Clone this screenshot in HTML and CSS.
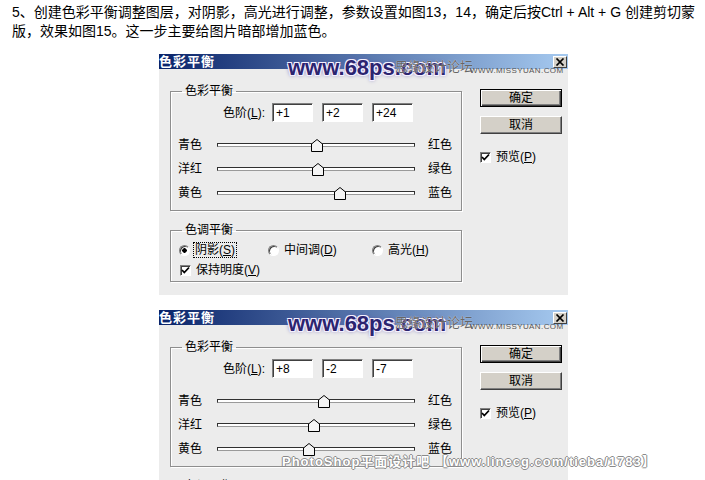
FILE: index.html
```html
<!DOCTYPE html>
<html lang="zh-CN">
<head>
    <meta charset="UTF-8">
    <title>色彩平衡</title>
    <link rel="stylesheet" href="styles.css">
</head>
<body>

    <div class="post">
        <p class="step">5、创建色彩平衡调整图层，对阴影，高光进行调整，参数设置如图13，14，确定后按Ctrl + Alt + G 创建剪切蒙<br>版，效果如图15。这一步主要给图片暗部增加蓝色。</p>

        <!-- 图13 -->
        <div class="dlg">
            <div class="titlebar">
                <span class="title">色彩平衡</span>
                <span class="close"><svg width="10" height="8" viewBox="0 0 10 8"><path d="M1.5 0.5 L8.5 7.5 M8.5 0.5 L1.5 7.5" stroke="#000" stroke-width="1.7"/></svg></span>
            </div>
            <span class="mark-68">www.68ps.com</span>
            <span class="mark-cn">思缘设计论坛</span>
            <span class="mark-url">WWW.MISSYUAN.COM</span>

            <div class="dlg-body">
                <div class="main">
                    <fieldset class="group">
                        <legend>色彩平衡</legend>
                        <div class="levels">
                            <span class="levels-label">色阶(<u>L</u>):</span>
                            <span class="field">+1</span>
                            <span class="field">+2</span>
                            <span class="field">+24</span>
                        </div>
                        <div class="sliders">
                            <div class="slider">
                                <span>青色</span>
                                <div class="track"><svg class="thumb" style="left: calc(50% + 1px)" width="12" height="13" viewBox="0 0 12 13"><path d="M0.5 5 L6 0.5 L11.5 5 L11.5 12.5 L0.5 12.5 Z" fill="#f4f4f4" stroke="#000"/></svg></div>
                                <span>红色</span>
                            </div>
                            <div class="slider">
                                <span>洋红</span>
                                <div class="track"><svg class="thumb" style="left: calc(50% + 2px)" width="12" height="13" viewBox="0 0 12 13"><path d="M0.5 5 L6 0.5 L11.5 5 L11.5 12.5 L0.5 12.5 Z" fill="#f4f4f4" stroke="#000"/></svg></div>
                                <span>绿色</span>
                            </div>
                            <div class="slider">
                                <span>黄色</span>
                                <div class="track"><svg class="thumb" style="left: calc(50% + 24px)" width="12" height="13" viewBox="0 0 12 13"><path d="M0.5 5 L6 0.5 L11.5 5 L11.5 12.5 L0.5 12.5 Z" fill="#f4f4f4" stroke="#000"/></svg></div>
                                <span>蓝色</span>
                            </div>
                        </div>
                    </fieldset>

                    <fieldset class="group tone">
                        <legend>色调平衡</legend>
                        <div class="radios">
                            <span class="radio-item"><span class="radio on"></span><span class="focus">阴影(<u>S</u>)</span></span>
                            <span class="radio-item"><span class="radio"></span><span>中间调(<u>D</u>)</span></span>
                            <span class="radio-item"><span class="radio"></span><span>高光(<u>H</u>)</span></span>
                        </div>
                        <div class="check-row">
                            <span class="checkbox"><svg width="9" height="9" viewBox="0 0 9 9"><path d="M1 4 L3.3 6.5 L8 1.5" stroke="#000" stroke-width="1.8" fill="none"/></svg></span>
                            <span>保持明度(<u>V</u>)</span>
                        </div>
                    </fieldset>
                </div>

                <div class="side">
                    <button class="btn default">确定</button>
                    <button class="btn">取消</button>
                    <div class="preview">
                        <span class="checkbox"><svg width="9" height="9" viewBox="0 0 9 9"><path d="M1 4 L3.3 6.5 L8 1.5" stroke="#000" stroke-width="1.8" fill="none"/></svg></span>
                        <span>预览(<u>P</u>)</span>
                    </div>
                </div>
            </div>
        </div>

        <!-- 图14 -->
        <div class="dlg">
            <div class="titlebar">
                <span class="title">色彩平衡</span>
                <span class="close"><svg width="10" height="8" viewBox="0 0 10 8"><path d="M1.5 0.5 L8.5 7.5 M8.5 0.5 L1.5 7.5" stroke="#000" stroke-width="1.7"/></svg></span>
            </div>
            <span class="mark-68">www.68ps.com</span>
            <span class="mark-cn">思缘设计论坛</span>
            <span class="mark-url">WWW.MISSYUAN.COM</span>
            <span class="mark-bottom">PhotoShop平面设计吧 【www.linecg.com/tieba/1783】</span>

            <div class="dlg-body">
                <div class="main">
                    <fieldset class="group">
                        <legend>色彩平衡</legend>
                        <div class="levels">
                            <span class="levels-label">色阶(<u>L</u>):</span>
                            <span class="field">+8</span>
                            <span class="field">-2</span>
                            <span class="field">-7</span>
                        </div>
                        <div class="sliders">
                            <div class="slider">
                                <span>青色</span>
                                <div class="track"><svg class="thumb" style="left: calc(50% + 8px)" width="12" height="13" viewBox="0 0 12 13"><path d="M0.5 5 L6 0.5 L11.5 5 L11.5 12.5 L0.5 12.5 Z" fill="#f4f4f4" stroke="#000"/></svg></div>
                                <span>红色</span>
                            </div>
                            <div class="slider">
                                <span>洋红</span>
                                <div class="track"><svg class="thumb" style="left: calc(50% - 2px)" width="12" height="13" viewBox="0 0 12 13"><path d="M0.5 5 L6 0.5 L11.5 5 L11.5 12.5 L0.5 12.5 Z" fill="#f4f4f4" stroke="#000"/></svg></div>
                                <span>绿色</span>
                            </div>
                            <div class="slider">
                                <span>黄色</span>
                                <div class="track"><svg class="thumb" style="left: calc(50% - 7px)" width="12" height="13" viewBox="0 0 12 13"><path d="M0.5 5 L6 0.5 L11.5 5 L11.5 12.5 L0.5 12.5 Z" fill="#f4f4f4" stroke="#000"/></svg></div>
                                <span>蓝色</span>
                            </div>
                        </div>
                    </fieldset>

                    <fieldset class="group tone">
                        <legend>色调平衡</legend>
                        <div class="radios">
                            <span class="radio-item"><span class="radio"></span><span>阴影(<u>S</u>)</span></span>
                            <span class="radio-item"><span class="radio"></span><span>中间调(<u>D</u>)</span></span>
                            <span class="radio-item"><span class="radio on"></span><span class="focus">高光(<u>H</u>)</span></span>
                        </div>
                        <div class="check-row">
                            <span class="checkbox"><svg width="9" height="9" viewBox="0 0 9 9"><path d="M1 4 L3.3 6.5 L8 1.5" stroke="#000" stroke-width="1.8" fill="none"/></svg></span>
                            <span>保持明度(<u>V</u>)</span>
                        </div>
                    </fieldset>
                </div>

                <div class="side">
                    <button class="btn default">确定</button>
                    <button class="btn">取消</button>
                    <div class="preview">
                        <span class="checkbox"><svg width="9" height="9" viewBox="0 0 9 9"><path d="M1 4 L3.3 6.5 L8 1.5" stroke="#000" stroke-width="1.8" fill="none"/></svg></span>
                        <span>预览(<u>P</u>)</span>
                    </div>
                </div>
            </div>
        </div>
    </div>

</body>
</html>
```

FILE: styles.css
```css
* {
    box-sizing: border-box;
}

body {
    margin: 0;
    background: #fff;
    color: #000;
    font-family: "Liberation Sans", "Noto Sans CJK SC", sans-serif;
}

.post {
    padding: 3px 0 0 12px;
}

.step {
    margin: 0;
    font-size: 14px;
    line-height: 19px;
    white-space: nowrap;
}

/* dialog screenshots */
.dlg {
    position: relative;
    width: 409px;
    margin: 13px 0 0 147px;
    background: #ececec;
    font-size: 12px;
    line-height: 14px;
}

.dlg + .dlg {
    margin-top: 15px;
}

.titlebar {
    display: flex;
    align-items: center;
    justify-content: space-between;
    height: 15px;
    padding: 0 1px 0 0;
    background: linear-gradient(to right, #0a246a, #a6caf0);
}

.title {
    color: #fff;
    font-size: 13px;
    font-weight: bold;
    letter-spacing: 1px;
}

.close {
    display: flex;
    align-items: center;
    justify-content: center;
    width: 14px;
    height: 12px;
    background: #d4d0c8;
    border: 1px solid;
    border-color: #fff #404040 #404040 #fff;
}

/* watermarks */
.mark-68 {
    position: absolute;
    left: 129px;
    top: 1px;
    font-size: 22px;
    line-height: 26px;
    font-weight: bold;
    color: #2c2470;
    text-shadow: -1px -1px 0 #f4f0ff, 1px -1px 0 #f4f0ff, -1px 1px 0 #f4f0ff, 1px 1px 0 #f4f0ff, 0 0 4px #5a4fa8;
}

.mark-cn {
    position: absolute;
    left: 236px;
    top: 6px;
    color: #666;
    font-size: 13px;
    text-shadow: 0 0 1px #fff;
}

.mark-url {
    position: absolute;
    left: 311px;
    top: 12px;
    color: #555;
    font-size: 8px;
    line-height: 9px;
    letter-spacing: 0.4px;
}

.mark-bottom {
    position: absolute;
    left: 123px;
    top: 145px;
    z-index: 2;
    white-space: nowrap;
    color: #fff;
    font-size: 13px;
    font-weight: bold;
    letter-spacing: 1px;
    text-shadow: -1px 0 0 #8a8a8a, 1px 0 0 #8a8a8a, 0 -1px 0 #8a8a8a, 0 1px 0 #8a8a8a;
}

.dlg-body {
    display: flex;
    padding: 15px 6px 13px 11px;
}

.main {
    display: flex;
    flex-direction: column;
    gap: 12px;
}

.group {
    width: 292px;
    margin: 0;
    padding: 0 0 5px;
    border: 1px solid #8e8e8e;
    box-shadow: 1px 1px 0 #fff, inset 1px 1px 0 #fff;
}

.group legend {
    margin-left: 11px;
    padding: 0 3px;
    line-height: 14px;
}

.group.tone {
    padding-bottom: 1px;
}

.levels {
    display: flex;
    align-items: center;
    gap: 9px;
    height: 19px;
    margin-top: 5px;
}

.levels-label {
    width: 94px;
    margin-right: -2px;
    text-align: right;
}

.field {
    width: 41px;
    height: 19px;
    padding: 2px 0 0 3px;
    background: #fff;
    border: 1px solid;
    border-color: #808080 #fff #fff #808080;
    box-shadow: inset 1px 1px 0 #404040;
}

.sliders {
    margin-top: 11px;
}

.slider {
    display: flex;
    align-items: center;
    height: 24px;
    padding-left: 7px;
}

.track {
    position: relative;
    width: 198px;
    height: 4px;
    margin: 0 13px 0 15px;
    background: #fff;
    border: 1px solid #303030;
    border-bottom-color: #9a9a9a;
}

.thumb {
    position: absolute;
    top: -5px;
    transform: translateX(-50%);
}

.radios {
    display: grid;
    grid-template-columns: 89px 104px auto;
    align-items: center;
    height: 20px;
    margin-top: 3px;
    padding-left: 8px;
}

.radio-item {
    display: flex;
    align-items: center;
    gap: 5px;
}

.radio {
    width: 11px;
    height: 11px;
    border-radius: 50%;
    background: #fff;
    border: 1px solid;
    border-color: #808080 #fff #fff #808080;
    box-shadow: inset 1px 1px 0 #404040;
}

.radio.on {
    background: radial-gradient(circle, #000 0 2px, #fff 2.5px);
}

.focus {
    padding: 0 1px;
    margin-left: -1px;
    outline: 1px dotted #000;
}

.check-row,
.preview {
    display: flex;
    align-items: center;
    gap: 5px;
    height: 20px;
    padding-left: 9px;
}

.checkbox {
    display: flex;
    align-items: center;
    justify-content: center;
    width: 11px;
    height: 11px;
    background: #fff;
    border: 1px solid;
    border-color: #808080 #fff #fff #808080;
    box-shadow: inset 1px 1px 0 #404040;
}

.side {
    display: flex;
    flex-direction: column;
    gap: 9px;
    margin-left: 18px;
    padding-top: 5px;
}

.btn {
    width: 82px;
    height: 18px;
    padding: 0;
    font: inherit;
    color: #000;
    background: #d4d0c8;
    border: 1px solid;
    border-color: #fff #404040 #404040 #fff;
    box-shadow: inset -1px -1px 0 #808080;
}

.btn.default {
    border-color: #000;
    box-shadow: inset 1px 1px 0 #fff, inset -1px -1px 0 #404040, inset -2px -2px 0 #808080;
}

.preview {
    height: 14px;
    margin-top: 7px;
    padding-left: 0;
}
```
